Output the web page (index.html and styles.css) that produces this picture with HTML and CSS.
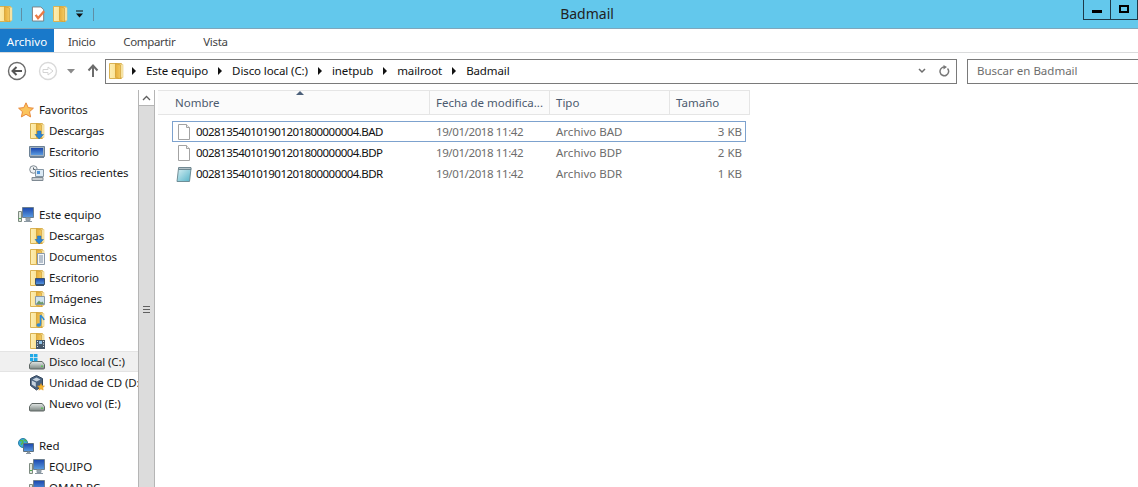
FILE: index.html
```html
<!DOCTYPE html>
<html lang="es">
<head>
    <meta charset="UTF-8">
    <title>Badmail</title>
    <link rel="stylesheet" href="styles.css">
</head>
<body>
    <!-- iconos -->
    <svg class="sprite" xmlns="http://www.w3.org/2000/svg">
        <defs>
            <linearGradient id="gFolder" x1="0" y1="0" x2="1" y2="0"><stop offset="0" stop-color="#fdeeb4"/><stop offset="1" stop-color="#f8d878"/></linearGradient>
            <linearGradient id="gDoor" x1="0" y1="0" x2="1" y2="0"><stop offset="0" stop-color="#e6ad3a"/><stop offset="1" stop-color="#f3c95f"/></linearGradient>
            <linearGradient id="gScreen" x1="0" y1="0" x2="0" y2="1"><stop offset="0" stop-color="#1a46ad"/><stop offset="1" stop-color="#5a9be0"/></linearGradient>
            <linearGradient id="gDisk" x1="0" y1="0" x2="0" y2="1"><stop offset="0" stop-color="#e3e8e6"/><stop offset="1" stop-color="#7b8581"/></linearGradient>
            <linearGradient id="gNote" x1="0" y1="0" x2="1" y2="1"><stop offset="0" stop-color="#d8f0f4"/><stop offset="1" stop-color="#55b3c8"/></linearGradient>
        </defs>
        <symbol id="folder" viewBox="0 0 16 16">
            <path d="M1.500 .500h12v15h-12z" fill="url(#gFolder)" stroke="#dab355"/>
            <path d="M7.500 .500l5 1.500v14l-5-1.500z" fill="url(#gDoor)" stroke="#d29f35" stroke-width=".8"/>
            <path d="M13 1.500h2v13h-2z" fill="#fdeeb4" stroke="#e6c878" stroke-width=".6"/>
        </symbol>
        <symbol id="folder-down" viewBox="0 0 16 16">
            <use href="#folder"/>
            <path d="M8.500 8h3.500v3.500h2.500L10.200 16 6 11.500h2.500z" fill="#2b86d8" stroke="#1c65b0" stroke-width=".5"/>
        </symbol>
        <symbol id="folder-doc" viewBox="0 0 16 16">
            <use href="#folder"/>
            <path d="M8.500 4.500h7v11h-7z" fill="#f4f6f8" stroke="#8b99a8"/>
            <path d="M10 7h4M10 9h4M10 11h4M10 13h4" stroke="#7b8da3"/>
        </symbol>
        <symbol id="folder-desk" viewBox="0 0 16 16">
            <use href="#folder"/>
            <path d="M6.500 8.500h9v6h-9z" fill="url(#gScreen)" stroke="#39536f"/>
            <path d="M7 15.500h8" stroke="#39536f"/>
        </symbol>
        <symbol id="folder-pic" viewBox="0 0 16 16">
            <use href="#folder"/>
            <path d="M6.500 5.500h9v8h-9z" fill="#cfe3ee" stroke="#8b99a8"/>
            <path d="M7 13l3-3.500 2 2 1.500-1 1.500 2.500z" fill="#6f9a6a"/>
        </symbol>
        <symbol id="folder-music" viewBox="0 0 16 16">
            <use href="#folder"/>
            <path d="M11.500 3v9.500M11.500 3c1 2 3 2.500 3.500 5" fill="none" stroke="#2d8ad8" stroke-width="1.600"/>
            <ellipse cx="9.800" cy="13" rx="2.300" ry="1.800" fill="#2d8ad8"/>
        </symbol>
        <symbol id="folder-film" viewBox="0 0 16 16">
            <use href="#folder"/>
            <path d="M7 7h9v9H7z" fill="#46586a"/>
            <path d="M8 8h1v1H8zM8 10.500h1v1H8zM8 13h1v1H8zM14 8h1v1h-1zM14 10.500h1v1h-1zM14 13h1v1h-1z" fill="#dfe7ee"/>
            <path d="M10 8h3v3h-3z" fill="#8fc3e8"/>
        </symbol>
        <symbol id="star" viewBox="0 0 16 16">
            <path d="M8 .8l2.200 4.800 5.200.6-3.900 3.500 1.100 5.200L8 12.300l-4.600 2.600 1.100-5.200L.6 6.200l5.200-.6z" fill="#fbc45c" stroke="#e8893a"/>
        </symbol>
        <symbol id="desktop" viewBox="0 0 16 16">
            <path d="M.500 2.500h15v10H.500z" fill="#9fb0c0" stroke="#6d8296"/>
            <path d="M2 4h12v7H2z" fill="url(#gScreen)"/>
            <path d="M1 13.500h14" stroke="#6d8296"/>
        </symbol>
        <symbol id="recent" viewBox="0 0 16 16">
            <circle cx="4.500" cy="4.500" r="3.800" fill="#eef1f3" stroke="#7f8a93"/>
            <path d="M4.500 2.500v2h2" fill="none" stroke="#59636b"/>
            <path d="M6.500 4.500h8v7h-8z" fill="#dbe9f4" stroke="#8495a3"/>
            <path d="M8 6h3v3H8z" fill="#4d93d8"/>
            <path d="M3 12.500h11v3H3z" fill="#c9ced2" stroke="#7f8a93"/>
        </symbol>
        <symbol id="computer" viewBox="0 0 16 16">
            <path d="M.500 4.500h3v10h-3z" fill="#dfe6dd" stroke="#7d8a80"/>
            <path d="M1 11.500h2" stroke="#4fb04f"/>
            <path d="M4.500 .500h11v10h-11z" fill="url(#gScreen)" stroke="#6c7f8f"/>
            <path d="M8 11h4v2.500H8zM6 14.500h8" fill="#9aa7b0" stroke="#8b98a2"/>
        </symbol>
        <symbol id="disk" viewBox="0 0 16 16">
            <path d="M2.800 7.500h10.400l2.300 3v3.500a1 1 0 0 1-1 1H1.500a1 1 0 0 1-1-1v-3.500z" fill="url(#gDisk)" stroke="#5f6764"/>
            <path d="M12 11.500h2v1.500h-2z" fill="#5ec05a"/>
        </symbol>
        <symbol id="disk-win" viewBox="0 0 16 16">
            <use href="#disk"/>
            <path d="M1 0h3.300v3.300H1zM5 0h3.500v3.300H5zM1 4h3.300v3.300H1zM5 4h3.500v3.300H5z" fill="#1fa8e6"/>
        </symbol>
        <symbol id="vbox" viewBox="0 0 16 16">
            <path d="M7.500.500l6 3v7l-6 4.500-6-4.500v-7z" fill="#49627f" stroke="#34465c"/>
            <path d="M7.500 2.500l4 2-4 2-4-2zM2.800 5.500l4 2v4.500l-4-2.500z" fill="#c7d3df"/>
            <path d="M12 8.500l1.100 2.300 2.400.3-1.800 1.600.5 2.400-2.200-1.200-2.200 1.200.5-2.400-1.800-1.600 2.400-.3z" fill="#f5b530" stroke="#d98d1b" stroke-width=".5"/>
        </symbol>
        <symbol id="network" viewBox="0 0 16 16">
            <circle cx="5" cy="5" r="4.500" fill="#39a9dc" stroke="#2a7ea6"/>
            <path d="M2 3c2-1 3 0 3 1s-2 1-1.500 3M6 1.500c1 1 2 1 2.500 2" fill="none" stroke="#57b947" stroke-width="1.500"/>
            <path d="M5.500 5.500h10v8h-10z" fill="url(#gScreen)" stroke="#5c7080"/>
            <path d="M9.500 14h2v1.500h-2zM8 15.500h5" fill="#8b98a2" stroke="#8b98a2"/>
        </symbol>
        <symbol id="doc" viewBox="0 0 16 16">
            <path d="M2.500 .500h8l3 3v12h-11z" fill="#fff" stroke="#a3a3a3"/>
            <path d="M10.500 .500v3h3" fill="#f0f0f0" stroke="#a3a3a3"/>
        </symbol>
        <symbol id="note" viewBox="0 0 16 16">
            <path d="M2.500 2.500h12.500l-1.500 13h-12.500z" fill="url(#gNote)" stroke="#6f8e97"/>
            <path d="M2.500 1.500h12.500v2h-12.500z" fill="#dfe9ec" stroke="#5f7a84" stroke-width=".8"/>
            <path d="M4 1v3M6 1v3M8 1v3M10 1v3M12 1v3M14 1v3" stroke="#5f7a84" stroke-width=".7"/>
        </symbol>
    </svg>

    <header class="titlebar">
        <div class="quick">
            <svg class="ico-clip"><use href="#folder"/></svg>
            <span class="quick-sep first"></span>
            <svg class="ico-props" viewBox="0 0 16 16">
                <path d="M1.500 .500h9l3 3v12h-12z" fill="#fff" stroke="#7d7d7d"/>
                <path d="M5 9l2.500 3.500L14 5" fill="none" stroke="#ea7b45" stroke-width="2.500"/>
            </svg>
            <svg class="ico-new"><use href="#folder"/></svg>
            <svg class="ico-drop" viewBox="0 0 9 8"><path d="M1 1h7" stroke="#111"/><path d="M1 3.500h7L4.500 7.500z" fill="#111"/></svg>
            <span class="quick-sep"></span>
        </div>
        <div class="title">Badmail</div>
        <div class="winbtns">
            <div class="winbtn"><span class="min"></span></div>
            <div class="winbtn"><span class="max"></span></div>
        </div>
    </header>

    <nav class="tabs">
        <a class="tab tab-file">Archivo</a>
        <a class="tab">Inicio</a>
        <a class="tab">Compartir</a>
        <a class="tab">Vista</a>
    </nav>

    <div class="addressrow">
        <svg class="nav-back" viewBox="0 0 20 20">
            <circle cx="10" cy="10" r="8.500" fill="#fff" stroke="#6b6b6b" stroke-width="1.400"/>
            <path d="M15 10H6M9.500 6L5.500 10l4 4" fill="none" stroke="#555" stroke-width="2"/>
        </svg>
        <svg class="nav-fwd" viewBox="0 0 20 20">
            <circle cx="10" cy="10" r="8.500" fill="#fff" stroke="#d9d9d9" stroke-width="1.400"/>
            <path d="M5 8.500h5V6l5 4-5 4v-2.500H5z" fill="#fff" stroke="#d4d4d4"/>
        </svg>
        <svg class="nav-drop" viewBox="0 0 8 5"><path d="M0 0h8L4 4.500z" fill="#8a8a8a"/></svg>
        <svg class="nav-up" viewBox="0 0 12 14"><path d="M6 13V2M1.500 6.500L6 1.500l4.500 5" fill="none" stroke="#6c6c6c" stroke-width="2"/></svg>
        <div class="address">
            <svg class="addr-folder"><use href="#folder"/></svg>
            <span class="crumb-arrow"></span><span>Este equipo</span>
            <span class="crumb-arrow"></span><span>Disco local (C:)</span>
            <span class="crumb-arrow"></span><span>inetpub</span>
            <span class="crumb-arrow"></span><span>mailroot</span>
            <span class="crumb-arrow"></span><span>Badmail</span>
            <span class="addr-space"></span>
            <svg class="addr-chev" viewBox="0 0 8 6"><path d="M1 1l3 3 3-3" fill="none" stroke="#6d6d6d" stroke-width="1.500"/></svg>
            <svg class="addr-refresh" viewBox="0 0 12 12"><path d="M9.500 3.500a4.300 4.300 0 1 1-3-1.400" fill="none" stroke="#777" stroke-width="1.500"/><path d="M5.500 0v4.500L9 2z" fill="#777"/></svg>
        </div>
        <div class="search">Buscar en Badmail</div>
    </div>

    <main class="main">
        <aside class="sidebar">
            <div class="item parent"><svg><use href="#star"/></svg>Favoritos</div>
            <div class="item"><svg><use href="#folder-down"/></svg>Descargas</div>
            <div class="item"><svg><use href="#desktop"/></svg>Escritorio</div>
            <div class="item"><svg><use href="#recent"/></svg>Sitios recientes</div>
            <div class="item spacer"></div>
            <div class="item parent"><svg><use href="#computer"/></svg>Este equipo</div>
            <div class="item"><svg><use href="#folder-down"/></svg>Descargas</div>
            <div class="item"><svg><use href="#folder-doc"/></svg>Documentos</div>
            <div class="item"><svg><use href="#folder-desk"/></svg>Escritorio</div>
            <div class="item"><svg><use href="#folder-pic"/></svg>Imágenes</div>
            <div class="item"><svg><use href="#folder-music"/></svg>Música</div>
            <div class="item"><svg><use href="#folder-film"/></svg>Vídeos</div>
            <div class="item active"><svg><use href="#disk-win"/></svg>Disco local (C:)</div>
            <div class="item"><svg><use href="#vbox"/></svg>Unidad de CD (D:)</div>
            <div class="item"><svg><use href="#disk"/></svg>Nuevo vol (E:)</div>
            <div class="item spacer"></div>
            <div class="item parent"><svg><use href="#network"/></svg>Red</div>
            <div class="item"><svg><use href="#computer"/></svg>EQUIPO</div>
            <div class="item"><svg><use href="#computer"/></svg>OMAR-PC</div>
        </aside>

        <div class="scrollbar">
            <div class="scroll-btn"><svg viewBox="0 0 9 6"><path d="M1 5l3.500-3.500L8 5" fill="none" stroke="#606060" stroke-width="1.300"/></svg></div>
            <div class="scroll-grip"><span></span><span></span><span></span></div>
        </div>

        <section class="files">
            <div class="header">
                <div class="col col-name">Nombre<span class="sort"></span></div>
                <div class="col">Fecha de modifica...</div>
                <div class="col">Tipo</div>
                <div class="col">Tamaño</div>
            </div>
            <div class="row selected">
                <div class="name"><svg><use href="#doc"/></svg>002813540101901201800000004.BAD</div>
                <div class="date">19/01/2018 11:42</div>
                <div class="kind">Archivo BAD</div>
                <div class="size">3 KB</div>
            </div>
            <div class="row">
                <div class="name"><svg><use href="#doc"/></svg>002813540101901201800000004.BDP</div>
                <div class="date">19/01/2018 11:42</div>
                <div class="kind">Archivo BDP</div>
                <div class="size">2 KB</div>
            </div>
            <div class="row">
                <div class="name"><svg><use href="#note"/></svg>002813540101901201800000004.BDR</div>
                <div class="date">19/01/2018 11:42</div>
                <div class="kind">Archivo BDR</div>
                <div class="size">1 KB</div>
            </div>
        </section>
    </main>
</body>
</html>
```
FILE: styles.css
```css
/* reset */
*{
    margin: 0;
    padding: 0;
    box-sizing: border-box;
}

html, body{
    height: 100%;
    overflow: hidden;
}

body{
    background-color: #fff;
    color: #1a1a1a;
    font-family: "Noto Sans", "Liberation Sans", sans-serif;
    font-size: 11.5px;
    display: flex;
    flex-direction: column;
}

svg{
    display: block;
    flex: none;
}

.sprite{
    position: absolute;
    width: 0;
    height: 0;
}

/* barra de titulo */
.titlebar{
    height: 29px;
    flex: none;
    background-color: #63c8ec;
    border-bottom: 1px solid #7fa6bb;
    display: flex;
    align-items: flex-start;
}

.quick{
    width: 91px;
    height: 28px;
    flex: none;
    display: flex;
    align-items: center;
}

.quick svg{
    width: 16px;
    height: 16px;
}

.quick .ico-clip{
    margin-left: -3px;
}

.quick-sep{
    width: 1px;
    height: 13px;
    flex: none;
    margin-left: 9px;
    background-color: #5f8ea5;
}

.quick-sep.first{
    margin-left: 8px;
}

.quick .ico-props{
    width: 15px;
    margin-left: 9px;
}

.quick .ico-new{
    margin-left: 6px;
}

.quick .ico-drop{
    width: 9px;
    height: 8px;
    margin-left: 7px;
}

.title{
    flex: 1;
    text-align: center;
    font-size: 14px;
    line-height: 27px;
    color: #222;
}

.winbtns{
    width: 55px;
    height: 20px;
    flex: none;
    display: flex;
    border: 1px solid #1e3a4a;
    border-top: 0;
}

.winbtn{
    flex: 1;
    display: flex;
    justify-content: center;
}

.winbtn + .winbtn{
    border-left: 1px solid #1e3a4a;
}

.min{
    width: 10px;
    height: 3px;
    margin-top: 10px;
    background-color: #000;
}

.max{
    width: 10px;
    height: 8px;
    margin-top: 5px;
    border: 2px solid #000;
}

/* pestañas */
.tabs{
    height: 24px;
    flex: none;
    display: flex;
    border-bottom: 1px solid #dadbdc;
}

.tab{
    margin-left: 28px;
    line-height: 26px;
    color: #444;
    letter-spacing: -.35px;
}

.tab-file{
    width: 54px;
    margin-left: 0;
    height: 23px;
    text-align: center;
    background-color: #1979ca;
    color: #fff;
    letter-spacing: 0;
}

.tab-file + .tab{
    margin-left: 14px;
}

/* direccion */
.addressrow{
    height: 35px;
    flex: none;
    display: flex;
    align-items: center;
    padding: 1px 0 0 7px;
}

.nav-back, .nav-fwd{
    width: 20px;
    height: 20px;
}

.nav-fwd{
    margin-left: 11px;
}

.nav-drop{
    width: 8px;
    height: 5px;
    margin-left: 9px;
}

.nav-up{
    width: 12px;
    height: 14px;
    margin-left: 12px;
}

.address{
    width: 852px;
    height: 25px;
    margin-left: 6px;
    flex: none;
    display: flex;
    align-items: center;
    padding: 0 5px 1px 2px;
    border: 1px solid #7a7a7a;
    color: #111;
    letter-spacing: -.1px;
}

.addr-folder{
    width: 16px;
    height: 16px;
    margin-right: -2px;
}

.crumb-arrow{
    width: 0;
    height: 0;
    margin: 0 10px;
    border-left: 4px solid #111;
    border-top: 4px solid transparent;
    border-bottom: 4px solid transparent;
}

.addr-space{
    flex: 1;
}

.addr-chev{
    width: 8px;
    height: 6px;
}

.addr-refresh{
    width: 12px;
    height: 12px;
    margin: 0 1px 0 12px;
}

.search{
    flex: 1;
    height: 25px;
    margin-left: 10px;
    padding-left: 9px;
    line-height: 22px;
    border: 1px solid #7a7a7a;
    border-right: 0;
    color: #6d6d6d;
}

/* contenido */
.main{
    flex: 1;
    min-height: 0;
    display: flex;
    padding-top: 2px;
}

.sidebar{
    width: 138px;
    flex: none;
    padding-top: 9px;
    overflow: hidden;
    letter-spacing: -.1px;
}

.item{
    height: 21px;
    display: flex;
    align-items: center;
    gap: 4px;
    padding-left: 29px;
    white-space: nowrap;
}

.item svg{
    width: 16px;
    height: 16px;
}

.item.parent{
    padding-left: 18px;
    gap: 5px;
}

.item.active{
    background-color: #f0f0f0;
    border-top: 1px solid #e4e4e4;
    border-bottom: 1px solid #e4e4e4;
}

.scrollbar{
    width: 17px;
    flex: none;
    background-color: #dcdcdc;
    border-left: 1px solid #b5b5b5;
    border-right: 1px solid #b5b5b5;
    position: relative;
}

.scroll-btn{
    height: 16px;
    display: flex;
    align-items: center;
    justify-content: center;
    background-color: #fff;
    border-bottom: 1px solid #b5b5b5;
}

.scroll-btn svg{
    width: 9px;
    height: 6px;
}

.scroll-grip{
    position: absolute;
    top: 216px;
    left: 4px;
}

.scroll-grip span{
    display: block;
    width: 7px;
    height: 1px;
    margin-bottom: 2px;
    background-color: #606060;
}

.files{
    flex: 1;
    padding-left: 3px;
}

.header{
    width: 592px;
    height: 25px;
    display: grid;
    grid-template-columns: 272px 120px 120px 80px;
    border-top: 1px solid #e5e5e5;
    border-bottom: 1px solid #e5e5e5;
    background-color: #fbfbfb;
    color: #4c5a6e;
}

.col{
    line-height: 24px;
    padding-left: 6px;
    border-right: 1px solid #e5e5e5;
    position: relative;
    white-space: nowrap;
}

.col-name{
    padding-left: 17px;
}

.sort{
    position: absolute;
    left: 138px;
    top: 0;
    width: 0;
    height: 0;
    border-left: 4px solid transparent;
    border-right: 4px solid transparent;
    border-bottom: 4px solid #4c607a;
}

.row{
    width: 574px;
    height: 21px;
    margin-left: 14px;
    display: grid;
    grid-template-columns: 258px 120px 120px 76px;
    align-items: center;
    color: #6d6d6d;
}

.row.selected{
    margin-top: 6px;
    border: 1px solid #7da2ce;
    grid-template-columns: 257px 120px 120px 75px;
}

.row > div{
    padding-left: 6px;
    white-space: nowrap;
}

.row .name{
    display: flex;
    align-items: center;
    gap: 4px;
    padding-left: 4px;
    color: #111;
    letter-spacing: -.55px;
}

.row.selected .name{
    padding-left: 3px;
}

.row .date{
    letter-spacing: -.4px;
}

.name svg{
    width: 16px;
    height: 16px;
}

.row .size{
    padding: 0 4px 0 0;
    text-align: right;
}

.row.selected .size{
    padding-right: 3px;
}
```
